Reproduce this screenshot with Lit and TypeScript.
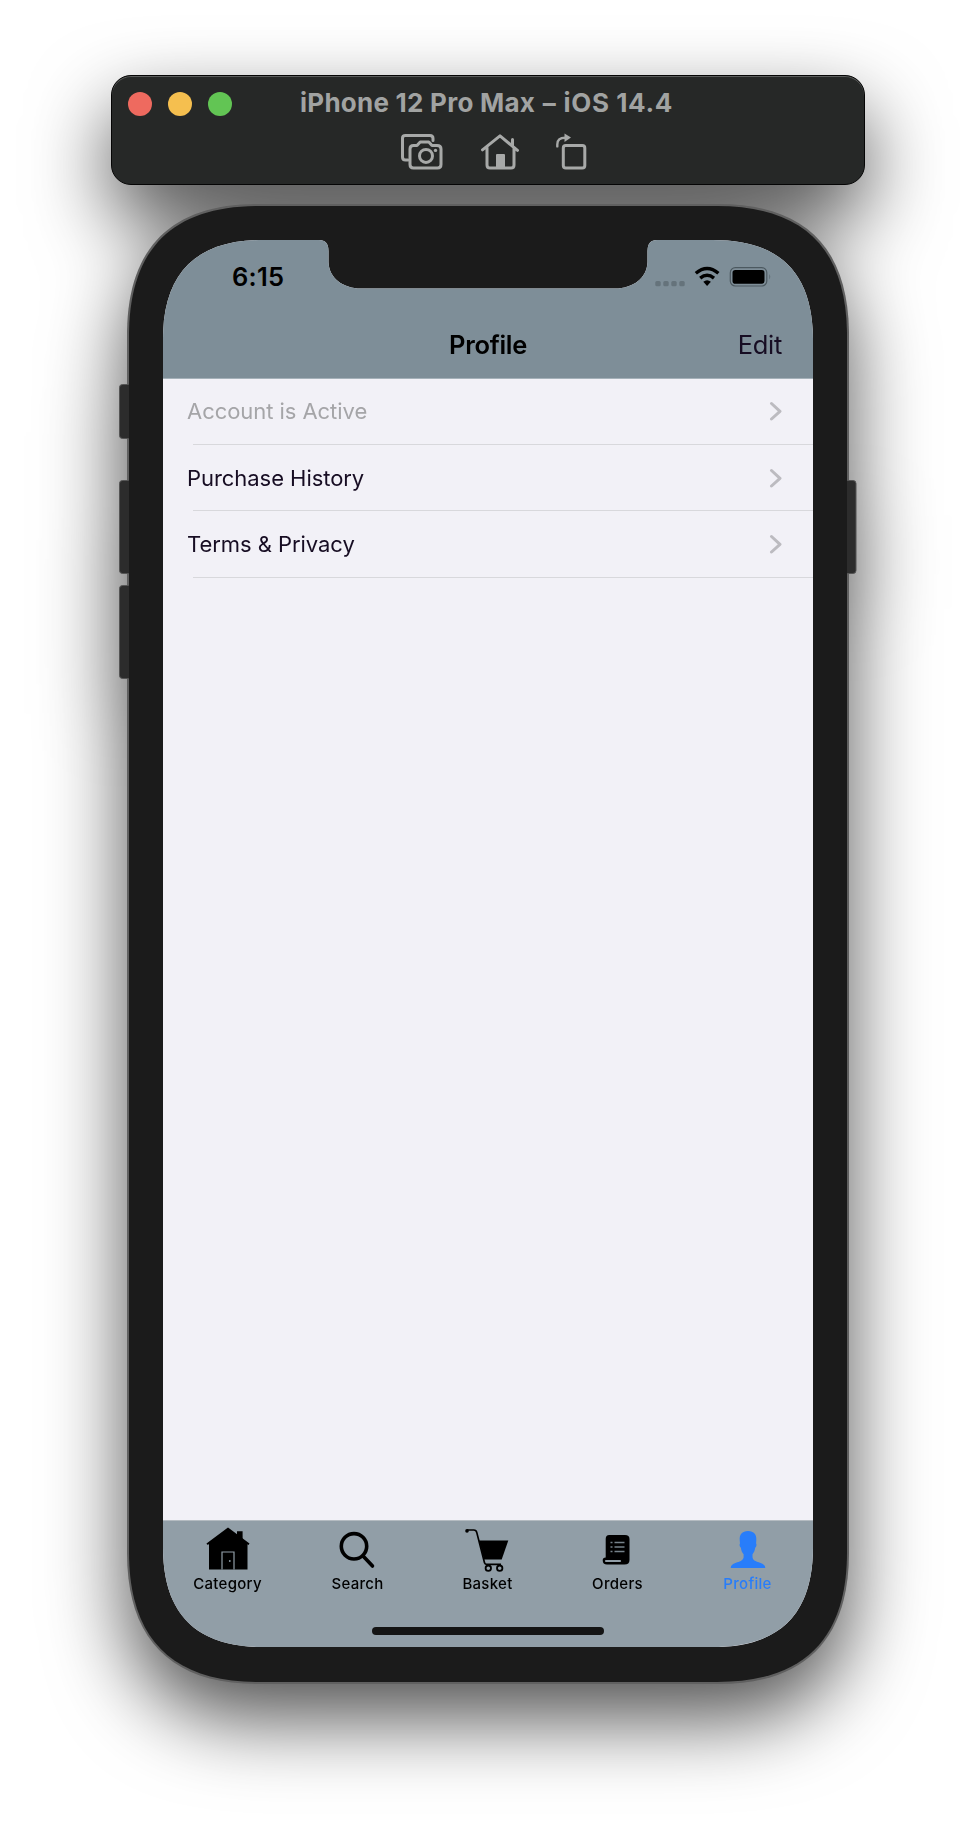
import { LitElement, html, css, svg } from "lit";
import { customElement } from "lit/decorators.js";
import { classMap } from "lit/directives/class-map.js";

const icons = {
  Category: svg`<path d="M23 2.5 44.5 18.5 43.6 20 42.5 19.3V44.5H4V19.3L2.2 19.8 1.5 18.5Z"/><path d="M32 6.2h5.6v9l-5.6-4.4z"/><path class="cut" d="M17 44.5V27h12v17.5"/><circle class="dot" cx="24.8" cy="36" r=".9"/>`,
  Search: svg`<circle class="ring" cx="19" cy="21.300" r="12.7"/><path class="ring" stroke-linecap="round" d="M28.3 31.300 37.5 41"/>`,
  Basket: svg`<circle cx="2" cy="5.900" r="1.8"/><path class="thin" d="M2 5h6.800q2.400 0 3 2.6l7.700 30.200q.4 1.500 2 1.500h14.500"/><path d="M14 15.500h29.300L36.700 34.500H19z"/><circle class="wheel" cx="23.300" cy="43.200" r="2.700"/><circle class="wheel" cx="34.700" cy="43.200" r="2.700"/>`,
  Orders: svg`<path d="M12.500 10H30q4.500 0 4.500 4V35q0 4.500-5 4.500H12q-4.300 0-4.300-4.300 0-2.500 3-2.700V13.800q0-3.800 3.500-3.800z"/><path class="lines" d="M15.500 17.600h2m2 0h10m-14 4.400h2m2 0h10m-14 4.400h2m2 0h10"/><path class="slot" d="M11 36h14"/>`,
  Profile: svg`<path d="M23 6c6 0 8.700 3.500 8.300 9l-.2 3.400c.7.700.5 3.300-.9 4.300-.5 3.300-1.500 5-2.700 6.500v3.300c.8 3.500 4.500 4.200 7.500 5.200 3.700 1.200 5.300 2.800 5.300 5.300H5.700c0-2.500 1.600-4.100 5.300-5.300 3.300-1 7-2 7.600-5.200v-3.300c-1.300-1.500-2.300-3.200-2.700-6.500-1.400-1-1.700-3.600-.9-4.300L14.700 15C14.400 9.500 17 6 23 6z"/>`,
};

const rows = [
  { label: "Account is Active", muted: true },
  { label: "Purchase History", muted: false },
  { label: "Terms & Privacy", muted: false },
];

@customElement("simulator-toolbar")
class SimulatorToolbar extends LitElement {
  static styles = css`
    :host {
      display: grid;
      grid-template: 56px 52px / 1fr;
      box-sizing: border-box;
      width: 754px;
      height: 110px;
      border: 1px solid #050505;
      border-radius: 20px;
      background: #262827;
      box-shadow: inset 0 1px 0 #5b5d5c;
      color: #a1a3a2;
    }
    .title-row {
      display: grid;
      grid-template-columns: 188px 1fr;
      align-items: center;
    }
    .lights { display: flex; gap: 16px; padding-left: 16px; }
    .light { width: 24px; height: 24px; border-radius: 50%; }
    .red { background: #ee6a5f; }
    .yellow { background: #f5bf4f; }
    .green { background: #62c554; }
    .title { font: 700 26px/30px Inter, sans-serif; letter-spacing: 0.25px; white-space: nowrap; margin-top: -3px; }
    .dash { padding: 0 1.200px; }
    .version { letter-spacing: 0.6px; }
    .tools { display: flex; padding: 1px 0 0 287px; }
    svg { display: block; fill: none; stroke: #a7a9a8; stroke-width: 3; stroke-linejoin: round; stroke-linecap: round; }
    .solid { fill: #a7a9a8; stroke: none; }
  `;
  render() {
    return html`
      <div class="title-row">
        <div class="lights"><span class="light red"></span><span class="light yellow"></span><span class="light green"></span></div>
        <span class="title">iPhone 12 Pro Max <span class="dash">–</span> <span class="version">iOS 14.4</span></span>
      </div>
      <div class="tools">
        <svg width="190" height="42" viewBox="0 -0.4 190 42" aria-hidden="true">
          <path d="M9 26.500H6.500Q3.500 26.500 3.500 23.500V4.500Q3.500 2 6.500 2H31Q34 2 34 5V7" />
          <path d="M14.500 12H18l3.200-3.500h8.600L33 12h5q4 0 4 3.500V31q0 3.500-3.500 3.500H14.500Q11 34.500 11 31V15.500Q11 12 14.500 12z" />
          <circle cx="27" cy="22.500" r="6.500" /><circle class="solid" cx="36.500" cy="17" r="1.700" />
          <path d="M83.500 16.500 101 2.500l17.500 14.500M88 14V31.500q0 3 3 3h21q3 0 3-3V14M113.500 6v6" />
          <path class="solid" d="M97 34V21.500q0-1 1-1h7q1 0 1 1V34z" />
          <rect x="164.300" y="12" width="21.500" height="22.500" rx="2.500" />
          <path stroke-width="2.400" d="M158.300 13V11q0-6.700 8-6.700" /><path class="solid" d="M165.500.2 172 4.200l-6.500 4.300z" />
        </svg>
      </div>
    `;
  }
}

@customElement("status-bar")
class StatusBar extends LitElement {
  static styles = css`
    :host { display: flex; justify-content: space-between; height: 73px; color: #000; }
    .time { font: 600 25.500px/30px Inter, sans-serif; letter-spacing: 0.3px; padding: 22px 0 0 69px; }
    svg { display: block; margin: 24px 40px 0 0; }
    .faint { fill: #65737b; }
    .arc { fill: none; stroke: #000; stroke-width: 3.400; }
    .shell { fill: none; stroke: #4c5960; stroke-width: 1.200; }
  `;
  render() {
    return html`
      <span class="time">6:15</span>
      <svg width="118" height="26" viewBox="0 0 118 26" aria-hidden="true">
        ${[0, 8, 16, 24].map((x) => svg`<rect class="faint" x=${x + 0.3} y="17" width="5.400" height="5.200" rx="1.500" />`)}
        <path class="arc" d="M40.800 9.300q11.300-9.600 22.600 0M45.200 14.100q6.900-5.600 13.800 0" />
        <path d="M48.300 17.700q3.800-3 7.600 0L52.100 22z" />
        <rect class="shell" x="75.300" y="3.700" width="36.500" height="18.300" rx="5" />
        <rect x="77.500" y="6" width="32" height="13.700" rx="2.800" />
        <path class="faint" d="M114 10q2.600 2.800 0 5.600z" />
      </svg>
    `;
  }
}

@customElement("tab-bar")
class TabBar extends LitElement {
  static styles = css`
    :host {
      display: grid;
      grid-template-rows: 106px 8px;
      justify-items: center;
      box-sizing: border-box;
      height: 127px;
      border-top: 1px solid #b4bbc1;
      background: #919ea7;
    }
    .tabs { display: grid; grid-template-columns: repeat(5, 130px); height: 80px; }
    .tab { display: flex; flex-direction: column; align-items: center; color: #000; fill: currentColor; padding-top: 4px; }
    .tab svg { display: block; width: 46px; height: 49px; }
    .tab.active { color: #287dfa; }
    .label { font: 500 15px/18px Inter, sans-serif; letter-spacing: 0.3px; margin: 1px 1px 0 0; }
    .cut { fill: none; stroke: #919ea7; stroke-width: 1.200; }
    .dot { fill: #919ea7; }
    .ring { fill: none; stroke: currentColor; stroke-width: 3.600; }
    .thin { fill: none; stroke: currentColor; stroke-width: 1.700; }
    .wheel { fill: none; stroke: currentColor; stroke-width: 1.800; }
    .lines { fill: none; stroke: #76828a; stroke-width: 1.500; }
    .slot { fill: none; stroke: #919ea7; stroke-width: 2.200; stroke-linecap: round; }
    .home { width: 232px; height: 8px; border-radius: 4px; background: #141414; }
  `;
  render() {
    return html`
      <nav class="tabs">
        ${Object.entries(icons).map(
          ([name, icon]) => html`
            <div class=${classMap({ tab: true, active: name === "Profile" })}>
              <svg viewBox="0 0 46 49" aria-hidden="true">${icon}</svg>
              <span class="label">${name}</span>
            </div>
          `
        )}
      </nav>
      <div class="home"></div>
    `;
  }
}

@customElement("phone-frame")
class PhoneFrame extends LitElement {
  static styles = css`
    :host { display: grid; width: 738px; height: 1482px; }
    .body { grid-area: 1 / 1; overflow: visible; }
    .screen {
      grid-area: 1 / 1;
      display: flex;
      flex-direction: column;
      width: 650px;
      height: 1407px;
      margin: 37px 0 0 44px;
      background: #f2f1f7;
      clip-path: path("M0 100C0 33 33 0 100 0H156Q165.500 0 165.500 11V22C166 38 180 48.500 198 48.500H452C470 48.500 484 38 484.500 22V11Q484.500 0 494 0H550C617 0 650 33 650 100V1307C650 1374 617 1407 550 1407H100C33 1407 0 1374 0 1307Z");
    }
    .key { fill: #2c2c2c; stroke: #555; stroke-width: 1; }
    .rim { fill: #606060; }
    .bezel { fill: #1b1b1b; }
  `;
  render() {
    return html`
      <svg class="body" width="738" height="1482" viewBox="0 0 738 1482" aria-hidden="true">
        <path class="rim" d="M8 132C8 45 52 1 138 1H600C686 1 730 45 730 132V1350C730 1436 686 1481 600 1481H138C52 1481 8 1436 8 1350Z" />
        <rect class="key" x=".5" y="181.500" width="12" height="54" rx="3" />
        <rect class="key" x=".5" y="277.500" width="12" height="93" rx="3" />
        <rect class="key" x=".5" y="382.500" width="12" height="93" rx="3" />
        <rect class="key" x="725" y="277.500" width="12" height="93" rx="3" />
        <path class="bezel" d="M10 133C10 46 53 3 140 3H598C685 3 728 46 728 133V1349C728 1436 685 1479 598 1479H140C53 1479 10 1436 10 1349Z" />
      </svg>
      <div class="screen"><slot></slot></div>
    `;
  }
}

@customElement("app-root")
class AppRoot extends LitElement {
  static styles = css`
    :host {
      display: block;
      box-sizing: border-box;
      width: 976px;
      height: 1832px;
      padding-top: 75px;
      overflow: hidden;
      background: #fff;
      font-family: Inter, sans-serif;
    }
    .window {
      display: flex;
      flex-direction: column;
      align-items: center;
      gap: 18px;
      filter: drop-shadow(0 35px 40px rgba(0, 0, 0, 0.68));
    }
    .header { box-sizing: border-box; height: 139px; background: #7e8e98; border-bottom: 1px solid #a5b1b9; flex: none; }
    .nav { display: grid; grid-template-columns: 1fr auto 1fr; padding: 17px 31px 0; font-size: 25.500px; line-height: 30px; }
    .title { grid-column: 2; font-weight: 600; letter-spacing: -0.3px; color: #000; }
    .edit { justify-self: end; color: #170d23; letter-spacing: -0.3px; }
    .list { flex: 1; }
    .row { display: flex; align-items: center; box-sizing: border-box; height: 66px; padding: 0 0 1px 24px; color: #170d23; font-size: 22px; position: relative; }
    .row:last-child { height: 67px; }
    .row::after { content: ""; position: absolute; left: 30px; right: 0; bottom: 0; height: 1px; background: #d8d8dc; }
    .row.muted { color: #a5a5a8; padding-bottom: 2px; }
    .text { flex: 1; letter-spacing: -0.05px; }
    .chevron { margin-right: 30px; fill: none; stroke: #bcbbc0; stroke-width: 3; stroke-linecap: round; stroke-linejoin: round; }
  `;
  render() {
    return html`
      <div class="window">
        <simulator-toolbar></simulator-toolbar>
        <phone-frame>
          <div class="header">
            <status-bar></status-bar>
            <div class="nav"><span class="title">Profile</span><span class="edit">Edit</span></div>
          </div>
          <div class="list">
            ${rows.map(
              (row) => html`
                <div class=${classMap({ row: true, muted: row.muted })}>
                  <span class="text">${row.label}</span>
                  <svg class="chevron" width="14" height="20" viewBox="0 0 14 20" aria-hidden="true"><path d="M2.500 2.500 11 10.300 2.500 18" /></svg>
                </div>
              `
            )}
          </div>
          <tab-bar></tab-bar>
        </phone-frame>
      </div>
    `;
  }
}
